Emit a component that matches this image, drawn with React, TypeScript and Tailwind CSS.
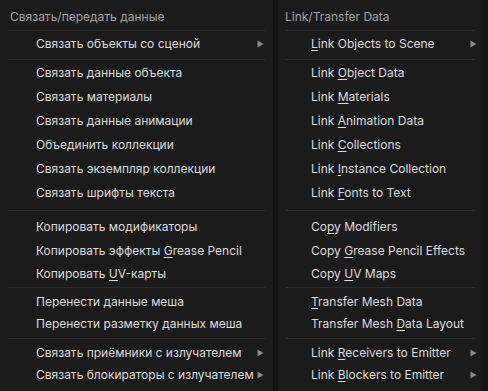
const font = { fontFamily: 'Inter, "Noto Sans", sans-serif' };

type Item = { label: React.ReactNode; arrow?: boolean; h?: number };

function U({ children }: { children: React.ReactNode }) {
  return <span className="underline decoration-1 underline-offset-[2px]">{children}</span>;
}

function Arrow() {
  return (
    <svg width="7" height="8" viewBox="0 0 7 8" className="shrink-0">
      <path d="M0.5 0.5 L6.5 4 L0.5 7.5 Z" fill="#8a8a8a" />
    </svg>
  );
}

function Row({ label, arrow, h = 24, indent, pr }: Item & { indent: string; pr: string }) {
  return (
    <div className={`flex items-center ${indent} ${pr} text-[12px] text-[#dcdcdc]`} style={{ height: h }}>
      <span className="flex-1 whitespace-nowrap">{label}</span>
      {arrow && <Arrow />}
    </div>
  );
}

function Sep({ h, at }: { h: number; at: number }) {
  return (
    <div className="px-[8px]" style={{ height: h, paddingTop: at }}>
      <div className="h-px bg-[#2e2e2e]" />
    </div>
  );
}

function Menu({ title, groups, indent, titlePad, width, pr }: { title: string; groups: Item[][]; indent: string; titlePad: string; width: string; pr: string }) {
  const seps = [
    { h: 2, at: 0 },
    { h: 5, at: 3 },
    { h: 10, at: 5 },
    { h: 6, at: 2 },
    { h: 7, at: 3 },
  ];
  return (
    <div className={`${width} h-full bg-[#1b1b1b] border-r border-[#101010] flex flex-col`}>
      <div className={`h-[30px] pt-[4px] flex items-center ${titlePad} text-[12px] text-[#a3a3a3]`}>{title}</div>
      {groups.map((g, i) => (
        <div key={i}>
          <Sep {...seps[i]} />
          {g.map((it, j) => (
            <Row key={j} {...it} indent={indent} pr={pr} />
          ))}
        </div>
      ))}
    </div>
  );
}

export default function App() {
  const left: Item[][] = [
    [{ label: 'Связать объекты со сценой', arrow: true }],
    [
      { label: 'Связать данные объекта' },
      { label: 'Связать материалы' },
      { label: 'Связать данные анимации' },
      { label: 'Объединить коллекции' },
      { label: 'Связать экземпляр коллекции' },
      { label: 'Связать шрифты текста' },
    ],
    [
      { label: 'Копировать модификаторы' },
      { label: <>Копировать эффекты <U>G</U>rease Pencil</> },
      { label: <>Копировать <U>U</U>V-карты</>, h: 22 },
    ],
    [
      { label: 'Перенести данные меша', h: 22 },
      { label: 'Перенести разметку данных меша', h: 22 },
    ],
    [
      { label: 'Связать приёмники с излучателем', arrow: true, h: 22 },
      { label: 'Связать блокираторы с излучателем', arrow: true, h: 22 },
    ],
  ];
  const right: Item[][] = [
    [{ label: <><U>L</U>ink Objects to Scene</>, arrow: true }],
    [
      { label: <>Link <U>O</U>bject Data</> },
      { label: <>Link <U>M</U>aterials</> },
      { label: <>Link <U>A</U>nimation Data</> },
      { label: <>Link <U>C</U>ollections</> },
      { label: <>Link <U>I</U>nstance Collection</> },
      { label: <>Link <U>F</U>onts to Text</> },
    ],
    [
      { label: <>Co<U>p</U>y Modifiers</> },
      { label: <>Copy <U>G</U>rease Pencil Effects</> },
      { label: <>Copy <U>U</U>V Maps</>, h: 22 },
    ],
    [
      { label: <><U>T</U>ransfer Mesh Data</>, h: 22 },
      { label: <>Transfer Mesh <U>D</U>ata Layout</>, h: 22 },
    ],
    [
      { label: <>Link <U>R</U>eceivers to Emitter</>, arrow: true, h: 22 },
      { label: <>Link <U>B</U>lockers to Emitter</>, arrow: true, h: 22 },
    ],
  ];
  return (
    <div className="w-[488px] h-[391px] bg-[#141414] flex gap-[4px] overflow-hidden" style={font}>
      <Menu title="Связать/передать данные" groups={left} indent="pl-[36px]" titlePad="pl-[10px]" width="w-[274px]" pr="pr-[9px]" />
      <Menu title="Link/Transfer Data" groups={right} indent="pl-[33px]" titlePad="pl-[7px]" width="w-[206px]" pr="pr-[6px]" />
    </div>
  );
}
